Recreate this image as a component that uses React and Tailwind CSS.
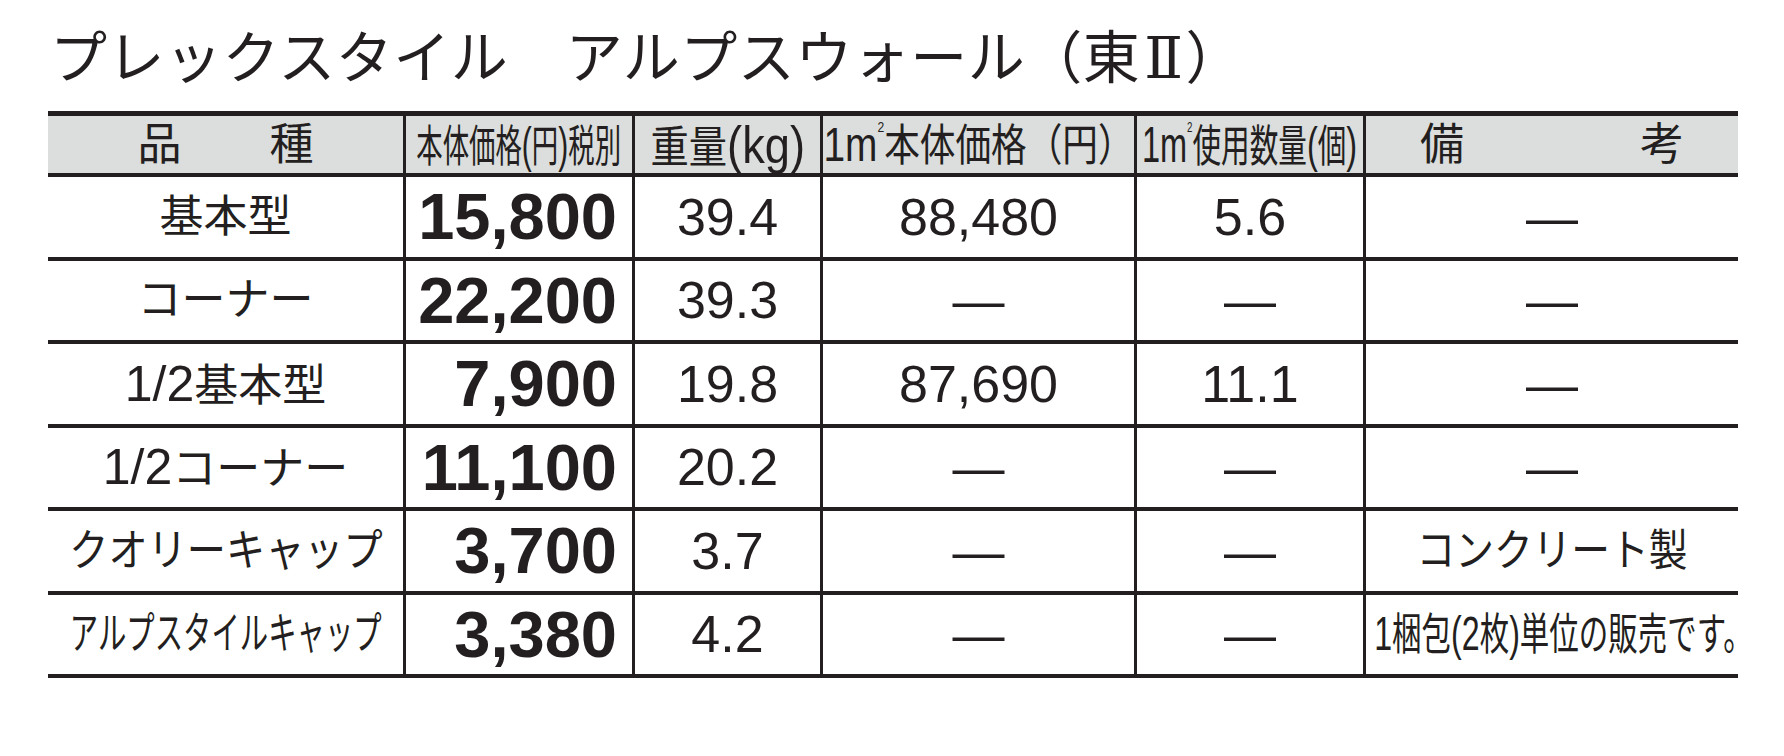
const grid = 'grid grid-cols-[358px_229px_188px_314px_229px_372px]'
const cell = 'flex h-full items-center justify-center border-r-[3px] border-[#231f20]'

const rows = [
  { name: '基本型', price: '15,800', weight: '39.4', m2: '88,480', qty: '5.6', note: '—' },
  { name: 'コーナー', price: '22,200', weight: '39.3', m2: '—', qty: '—', note: '—' },
  { name: <><span className="text-[50px]">1/2</span>基本型</>, price: '7,900', weight: '19.8', m2: '87,690', qty: '11.1', note: '—' },
  { name: <><span className="text-[50px]">1/2</span>コーナー</>, price: '11,100', weight: '20.2', m2: '—', qty: '—', note: '—' },
  { name: 'クオリーキャップ', nameCls: 'scale-x-[0.89]', price: '3,700', weight: '3.7', m2: '—', qty: '—', note: 'コンクリート製', noteCls: 'text-[44px] scale-x-[0.88]' },
  {
    name: 'アルプスタイルキャップ', nameCls: 'scale-x-[0.645]', price: '3,380', weight: '4.2', m2: '—', qty: '—',
    note: <><span className="text-[48px]">1</span>梱包<span className="text-[48px]">(2</span>枚<span className="text-[48px]">)</span>単位の販売です。</>,
    noteCls: 'ml-[22px] text-[44px] scale-x-[0.67]',
  },
]

function Num({ children }) {
  return <span className="text-[52px] leading-none">{children}</span>
}

export default function App() {
  return (
    <div className="h-[756px] w-[1784px] bg-white text-[#231f20] font-['Liberation_Sans','Noto_Sans_CJK_JP',sans-serif]">
      <h1 className="h-[111px] pl-[50px] pt-[25px] text-[57px] leading-[57px] tracking-[0.5px] font-['Noto_Sans_CJK_JP',sans-serif] whitespace-nowrap">
        プレックスタイル　アルプスウォール（東
        <span className="ml-[4px] font-['DejaVu_Serif','Noto_Sans_CJK_JP',serif]">Ⅱ</span>
        <span className="ml-[2px]">）</span>
      </h1>

      <div className="ml-[48px] w-[1690px]">
        {/* header */}
        <div className={`${grid} h-[66px] border-t-[5px] border-b-4 border-[#231f20] bg-[#dcdddd] text-[44px] leading-none`}>
          <div className={cell}><span className="whitespace-pre">品　　種</span></div>
          <div className={cell}>
            <span className="inline-block whitespace-nowrap scale-x-[0.6]">
              本体価格<span className="text-[50px]">(</span>円<span className="text-[50px]">)</span>税別
            </span>
          </div>
          <div className={cell}>
            <span className="inline-block whitespace-nowrap scale-x-[0.87]">
              重量<span className="text-[52px]">(kg)</span>
            </span>
          </div>
          <div className={cell}>
            <span className="inline-block whitespace-nowrap scale-x-[0.81]">
              <span className="text-[48px]">1m</span><sup className="top-[-29px] text-[15px]">2</sup>本体価格（円）
            </span>
          </div>
          <div className={cell}>
            <span className="inline-block whitespace-nowrap scale-x-[0.65]">
              <span className="text-[50px]">1m</span><sup className="top-[-30px] text-[15px]">2</sup>使用数量<span className="text-[50px]">(</span>個<span className="text-[50px]">)</span>
            </span>
          </div>
          <div className="flex h-full items-center justify-center">
            <span className="whitespace-pre">備　　　　考</span>
          </div>
        </div>

        {/* body */}
        {rows.map((r, i) => (
          <div key={i} className={`${grid} h-[83.5px] border-b-4 border-[#231f20] leading-none`}>
            <div className={cell}>
              <span className={`inline-block whitespace-nowrap text-[44px] ${r.nameCls || ''}`}>{r.name}</span>
            </div>
            <div className={`${cell} justify-end pr-[15px]`}>
              <span className="text-[65px] font-bold">{r.price}</span>
            </div>
            <div className={cell}><Num>{r.weight}</Num></div>
            <div className={cell}><Num>{r.m2}</Num></div>
            <div className={cell}><Num>{r.qty}</Num></div>
            <div className="flex h-full items-center justify-center">
              {r.noteCls
                ? <span className={`inline-block whitespace-nowrap ${r.noteCls}`}>{r.note}</span>
                : <Num>{r.note}</Num>}
            </div>
          </div>
        ))}
      </div>
    </div>
  )
}
